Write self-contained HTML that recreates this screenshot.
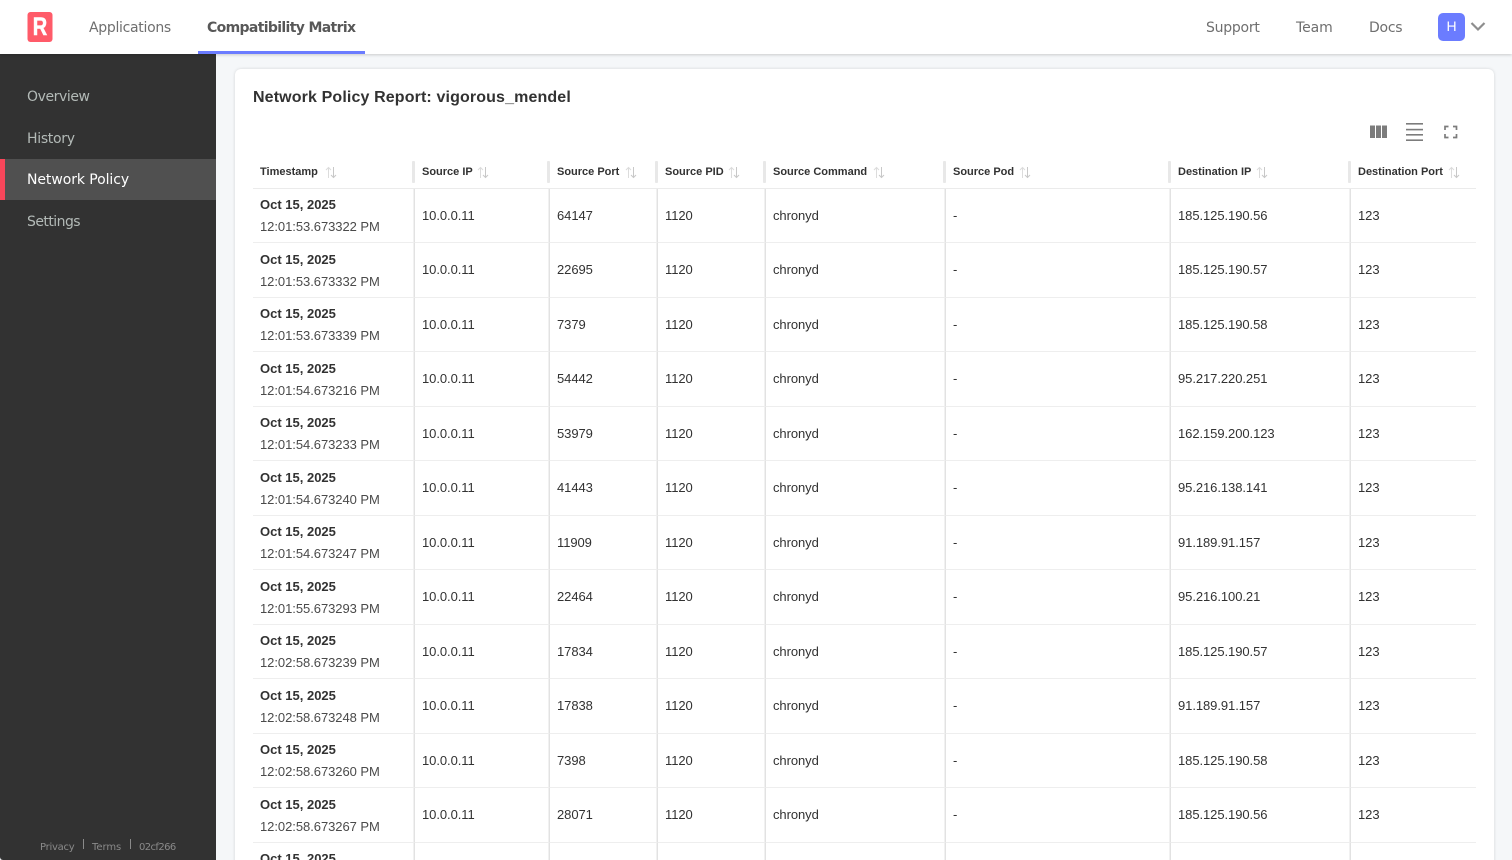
<!DOCTYPE html>
<html><head><meta charset="utf-8"><title>Network Policy Report</title>
<style>
html,body{margin:0;padding:0;width:1512px;height:860px;overflow:hidden;background:#f5f7f9;font-family:"Liberation Sans",sans-serif}
*{box-sizing:border-box}
#wrap{position:relative;width:1512px;height:860px;overflow:hidden;background:#f5f7f9}
.a{position:absolute;white-space:nowrap}
.nav{font-family:"DejaVu Sans",sans-serif;font-size:14px;letter-spacing:-.25px;color:#6f6f6f;line-height:20px}
#top{position:absolute;left:0;top:0;width:1512px;height:54px;background:#fff;box-shadow:0 1px 3px rgba(0,0,0,.18);z-index:3}
#side{position:absolute;left:0;top:54px;width:216px;height:806px;background:#323232;border-bottom-left-radius:3px;z-index:2}
.s{position:absolute;left:27px;font-family:"DejaVu Sans",sans-serif;font-size:14px;letter-spacing:-.3px;color:#b3bab7;line-height:20px}
.f{font:10px/14px "DejaVu Sans",sans-serif;letter-spacing:-.25px;color:#8a8a8a}
#card{position:absolute;left:235px;top:69px;width:1259px;height:820px;background:#fff;border-radius:6px;box-shadow:0 0 3px rgba(0,0,0,.14)}
table{position:absolute;left:253px;top:155px;border-collapse:separate;border-spacing:0;table-layout:fixed;width:1223px;font-size:13px;color:#323232}
th{height:34px;padding:0 0 0 7px;text-align:left;font-size:11px;font-weight:700;color:#323232;border-bottom:1px solid #ebebeb;position:relative;white-space:nowrap}
th:not(:last-child):after{content:"";position:absolute;right:0;top:6px;width:3px;height:22px;background:#e8e8e8;border-radius:1px}
td{padding:0 0 .5px 7px;border-bottom:1px solid #eeeeee;border-right:1px solid #e2e2e2;white-space:nowrap;letter-spacing:-.07px;box-shadow:inset -1px 0 0 #f1f1f1}
tbody tr:nth-child(odd) td{height:54px}
tbody tr:nth-child(even) td{height:55px}
td:first-child{line-height:22px;letter-spacing:0;padding:0 0 0 7px}
tbody tr:nth-child(even) td:first-child{padding-top:1px}
td:last-child{border-right:0;box-shadow:none}
td b{display:block;font-weight:700;color:#323232}
td span{display:block;letter-spacing:-.05px;color:#4a4a4a}
th svg{position:absolute;top:11px}
</style></head><body>
<div id="wrap">
<div id="top">
<svg class="a" style="left:27px;top:12px" width="26" height="30"><rect width="25" height="30" x="0.5" rx="3" fill="#ff5b69"/></svg>
<div class="a" style="left:27px;top:12px;width:26px;height:30px;text-align:center;font-size:25px;font-weight:700;line-height:30px;color:#fff;transform:scaleX(.8);-webkit-text-stroke:.6px #fff">R</div>
<div class="a nav" style="left:89px;top:18px;letter-spacing:-.3px">Applications</div>
<div class="a nav" style="left:207px;top:18px;font-weight:700;letter-spacing:-.65px;color:#585858">Compatibility Matrix</div>
<div class="a" style="left:198px;top:51px;width:167px;height:3px;background:#6b7cff"></div>
<div class="a nav" style="left:1206px;top:18px">Support</div>
<div class="a nav" style="left:1296px;top:18px;letter-spacing:-.1px">Team</div>
<div class="a nav" style="left:1369px;top:18px">Docs</div>
<div class="a" style="left:1438px;top:13px;width:27px;height:28px;background:#6b7cff;border-radius:5px;color:#fff;font-size:14px;line-height:27px;text-align:center">H</div>
<svg class="a" style="left:1470px;top:21px" width="16" height="11"><path d="M1.5 2 L8 8.5 L14.500 2" fill="none" stroke="#8e8e8e" stroke-width="2.200"/></svg>
</div>
<div id="side">
<div class="s" style="top:33px;letter-spacing:-.42px">Overview</div>
<div class="s" style="top:75px">History</div>
<div class="a" style="left:0;top:105px;width:216px;height:41px;background:#505050"></div>
<div class="a" style="left:0;top:105px;width:5px;height:41px;background:#f7465a"></div>
<div class="s" style="top:116px;color:#fff;letter-spacing:-.08px">Network Policy</div>
<div class="s" style="top:158px;letter-spacing:-.55px">Settings</div>
<div class="a f" style="left:40px;top:787px">Privacy</div>
<div class="a" style="left:83px;top:785px;width:1px;height:10px;background:#8a8a8a"></div>
<div class="a f" style="left:92px;top:787px;letter-spacing:-.05px">Terms</div>
<div class="a" style="left:130px;top:785px;width:1px;height:10px;background:#8a8a8a"></div>
<div class="a f" style="left:139px;top:787px;letter-spacing:-.6px">02cf266</div>
</div>
<div id="card"></div>
<div class="a" style="left:253px;top:87px;font-size:16px;font-weight:700;line-height:21px;color:#323232;letter-spacing:.13px">Network Policy Report: vigorous_mendel</div>
<svg class="a" style="left:1370px;top:120px" width="90" height="24">
<g fill="#7c7c7c"><rect x="0" y="5.500" width="5" height="12.500"/><rect x="6" y="5.500" width="5" height="12.500"/><rect x="12" y="5.500" width="5" height="12.500"/>
<rect x="36" y="3" width="17" height="1.600"/><rect x="36" y="8.800" width="17" height="1.600"/><rect x="36" y="14" width="17" height="1.600"/><rect x="36" y="19.400" width="17" height="1.600"/></g>
<path d="M75 10V6.500H78.500M83 6.500H86.500V10M86.500 14V17.500H83M78.500 17.500H75V14" fill="none" stroke="#7c7c7c" stroke-width="1.700"/>
</svg>
<table>
<colgroup><col style="width:162px"><col style="width:135px"><col style="width:108px"><col style="width:108px"><col style="width:180px"><col style="width:225px"><col style="width:180px"><col style="width:125px"></colgroup>
<thead><tr>
<th>Timestamp<svg style="left:72px" width="12" height="13"><path d="M3.500 12V1.500M1 4L3.500 1.500L6 4" fill="none" stroke="#dcdcdc"/><path d="M8.500 1V11.500M6 9L8.500 11.500L11 9" fill="none" stroke="#c8c8c8"/></svg></th>
<th>Source IP<svg style="left:62px" width="12" height="13"><path d="M3.500 12V1.500M1 4L3.500 1.500L6 4" fill="none" stroke="#dcdcdc"/><path d="M8.500 1V11.500M6 9L8.500 11.500L11 9" fill="none" stroke="#c8c8c8"/></svg></th>
<th>Source Port<svg style="left:75px" width="12" height="13"><path d="M3.500 12V1.500M1 4L3.500 1.500L6 4" fill="none" stroke="#dcdcdc"/><path d="M8.500 1V11.500M6 9L8.500 11.500L11 9" fill="none" stroke="#c8c8c8"/></svg></th>
<th>Source PID<svg style="left:70px" width="12" height="13"><path d="M3.500 12V1.500M1 4L3.500 1.500L6 4" fill="none" stroke="#dcdcdc"/><path d="M8.500 1V11.500M6 9L8.500 11.500L11 9" fill="none" stroke="#c8c8c8"/></svg></th>
<th>Source Command<svg style="left:107px" width="12" height="13"><path d="M3.500 12V1.500M1 4L3.500 1.500L6 4" fill="none" stroke="#dcdcdc"/><path d="M8.500 1V11.500M6 9L8.500 11.500L11 9" fill="none" stroke="#c8c8c8"/></svg></th>
<th>Source Pod<svg style="left:73px" width="12" height="13"><path d="M3.500 12V1.500M1 4L3.500 1.500L6 4" fill="none" stroke="#dcdcdc"/><path d="M8.500 1V11.500M6 9L8.500 11.500L11 9" fill="none" stroke="#c8c8c8"/></svg></th>
<th>Destination IP<svg style="left:85px" width="12" height="13"><path d="M3.500 12V1.500M1 4L3.500 1.500L6 4" fill="none" stroke="#dcdcdc"/><path d="M8.500 1V11.500M6 9L8.500 11.500L11 9" fill="none" stroke="#c8c8c8"/></svg></th>
<th>Destination Port<svg style="left:97px" width="12" height="13"><path d="M3.500 12V1.500M1 4L3.500 1.500L6 4" fill="none" stroke="#dcdcdc"/><path d="M8.500 1V11.500M6 9L8.500 11.500L11 9" fill="none" stroke="#c8c8c8"/></svg></th>
</tr></thead>
<tbody>
<tr><td><b>Oct 15, 2025</b><span>12:01:53.673322 PM</span></td><td>10.0.0.11</td><td>64147</td><td>1120</td><td>chronyd</td><td>-</td><td>185.125.190.56</td><td>123</td></tr>
<tr><td><b>Oct 15, 2025</b><span>12:01:53.673332 PM</span></td><td>10.0.0.11</td><td>22695</td><td>1120</td><td>chronyd</td><td>-</td><td>185.125.190.57</td><td>123</td></tr>
<tr><td><b>Oct 15, 2025</b><span>12:01:53.673339 PM</span></td><td>10.0.0.11</td><td>7379</td><td>1120</td><td>chronyd</td><td>-</td><td>185.125.190.58</td><td>123</td></tr>
<tr><td><b>Oct 15, 2025</b><span>12:01:54.673216 PM</span></td><td>10.0.0.11</td><td>54442</td><td>1120</td><td>chronyd</td><td>-</td><td>95.217.220.251</td><td>123</td></tr>
<tr><td><b>Oct 15, 2025</b><span>12:01:54.673233 PM</span></td><td>10.0.0.11</td><td>53979</td><td>1120</td><td>chronyd</td><td>-</td><td>162.159.200.123</td><td>123</td></tr>
<tr><td><b>Oct 15, 2025</b><span>12:01:54.673240 PM</span></td><td>10.0.0.11</td><td>41443</td><td>1120</td><td>chronyd</td><td>-</td><td>95.216.138.141</td><td>123</td></tr>
<tr><td><b>Oct 15, 2025</b><span>12:01:54.673247 PM</span></td><td>10.0.0.11</td><td>11909</td><td>1120</td><td>chronyd</td><td>-</td><td>91.189.91.157</td><td>123</td></tr>
<tr><td><b>Oct 15, 2025</b><span>12:01:55.673293 PM</span></td><td>10.0.0.11</td><td>22464</td><td>1120</td><td>chronyd</td><td>-</td><td>95.216.100.21</td><td>123</td></tr>
<tr><td><b>Oct 15, 2025</b><span>12:02:58.673239 PM</span></td><td>10.0.0.11</td><td>17834</td><td>1120</td><td>chronyd</td><td>-</td><td>185.125.190.57</td><td>123</td></tr>
<tr><td><b>Oct 15, 2025</b><span>12:02:58.673248 PM</span></td><td>10.0.0.11</td><td>17838</td><td>1120</td><td>chronyd</td><td>-</td><td>91.189.91.157</td><td>123</td></tr>
<tr><td><b>Oct 15, 2025</b><span>12:02:58.673260 PM</span></td><td>10.0.0.11</td><td>7398</td><td>1120</td><td>chronyd</td><td>-</td><td>185.125.190.58</td><td>123</td></tr>
<tr><td><b>Oct 15, 2025</b><span>12:02:58.673267 PM</span></td><td>10.0.0.11</td><td>28071</td><td>1120</td><td>chronyd</td><td>-</td><td>185.125.190.56</td><td>123</td></tr>
<tr><td><b>Oct 15, 2025</b><span>12:03:01.673210 PM</span></td><td>10.0.0.11</td><td>30412</td><td>1120</td><td>chronyd</td><td>-</td><td>185.125.190.57</td><td>123</td></tr>
</tbody></table>
</div>
</body></html>
